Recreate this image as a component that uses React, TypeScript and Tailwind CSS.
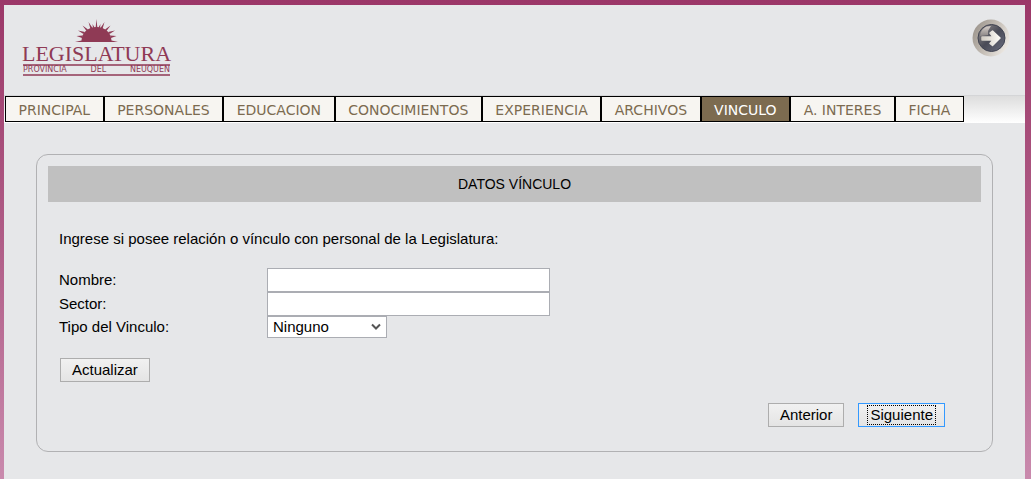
import { useState } from "react";
import type { ButtonHTMLAttributes } from "react";

const tabs = [
  "PRINCIPAL",
  "PERSONALES",
  "EDUCACION",
  "CONOCIMIENTOS",
  "EXPERIENCIA",
  "ARCHIVOS",
  "VINCULO",
  "A. INTERES",
  "FICHA",
];

function Logo() {
  return (
    <a href="#inicio" className="flex w-[147px] flex-col items-center text-[#8f3a55]">
      <svg viewBox="0 0 44 24" className="h-6 w-11" fill="currentColor" aria-hidden="true">
        <path d="M0 23Q3 22 6.500 21.500C7 13.500 13 8 21.500 8S36 13.500 36.500 21.500Q40 22 43 23Z" />
        <path d="M20.600 9 21.500 0 22.400 9ZM15.500 10 13.500 3 17.500 9ZM25.500 9 29.500 3 27.500 10ZM11.500 12 7.500 6.500 13 10.500ZM30 10.500 35.500 6.500 31.500 12ZM8.500 15 3 11.500 10 13ZM33 13 40 11.500 34.500 15ZM7 19 1.500 17 8 16.500ZM35 16.500 41.500 17 36 19ZM18 9 17.500 5 19.500 8.500ZM23.500 8.500 25.500 5 25 9Z" />
      </svg>
      <span className="font-['Liberation_Serif',serif] text-[22px] leading-[21px]">LEGISLATURA</span>
      <span className="flex w-full justify-between border-y-2 border-[#a5647a] font-['DejaVu_Sans',sans-serif] text-[8px] leading-[8px]">
        <span>PROVINCIA</span>
        <span>DEL</span>
        <span>NEUQUEN</span>
      </span>
    </a>
  );
}

function ExitIcon() {
  return (
    <svg viewBox="0 0 38 38" className="size-[38px]" aria-hidden="true">
      <defs>
        <linearGradient id="ring" x1="0" y1="0.2" x2="1" y2="0.7">
          <stop offset="0" stopColor="#9a938b" />
          <stop offset=".5" stopColor="#c4bdb5" />
          <stop offset="1" stopColor="#efebe6" />
        </linearGradient>
        <linearGradient id="glass" x1="0" y1="0" x2="1" y2="1">
          <stop offset="0" stopColor="#9a9492" />
          <stop offset=".5" stopColor="#4a4b57" />
          <stop offset="1" stopColor="#6b6e80" />
        </linearGradient>
        <linearGradient id="shine" x1="0" y1="0" x2="0" y2="1">
          <stop offset="0" stopColor="#d6cec9" />
          <stop offset="1" stopColor="#8b8686" />
        </linearGradient>
        <linearGradient id="arrow" gradientUnits="userSpaceOnUse" x1="9" y1="0" x2="29" y2="0">
          <stop offset="0" stopColor="#cfc9c1" />
          <stop offset="1" stopColor="#fffdf8" />
        </linearGradient>
      </defs>
      <circle cx="19" cy="19" r="18.500" fill="url(#ring)" />
      <circle cx="19.500" cy="19" r="13.500" fill="url(#glass)" stroke="#3f4250" strokeWidth="1" />
      <path d="M8 17C9 10 13 7 19 7L16 12 16 16Z" fill="url(#shine)" />
      <path
        d="M10 18H21L18 14 20.500 12 28 19 20.500 26.500 18 24.500 21 21H10Z"
        fill="url(#arrow)"
        stroke="url(#arrow)"
        strokeWidth="1.500"
        strokeLinejoin="round"
      />
    </svg>
  );
}

function FormButton({ className = "", ...props }: ButtonHTMLAttributes<HTMLButtonElement>) {
  return (
    <button
      className={`h-6 border bg-linear-to-b from-[#f1f1f1] to-[#e4e4e4] text-black ${className}`}
      {...props}
    />
  );
}

export default function App() {
  const [nombre, setNombre] = useState("");
  const [sector, setSector] = useState("");
  const [tipo, setTipo] = useState("Ninguno");

  return (
    <div className="min-h-screen bg-linear-to-b from-[#9b3768] via-[#b05d87] to-[#c98aad] pt-[5px] pr-[6px] pl-1">
      <div className="min-h-[calc(100vh-5px)] bg-[#e6e7e9] font-['Liberation_Sans',Arial,sans-serif] text-[15px] text-black">
        <header className="flex h-[90px] items-start justify-between pt-[14px] pr-[15px] pl-[19px]">
          <Logo />
          <a href="#salir" aria-label="Salir">
            <ExitIcon />
          </a>
        </header>

        <nav className="border-t border-[#d4d5d7] bg-linear-to-b from-[#dddddd] to-white pb-px pl-px">
          <div className="flex max-w-[959px]">
            {tabs.map((tab) => (
              <a
                key={tab}
                href="#"
                aria-current={tab === "VINCULO" ? "page" : undefined}
                className={`flex-auto border border-black px-[11px] pt-0.5 text-center font-['Verdana','DejaVu_Sans',sans-serif] text-[14px] leading-[22px] whitespace-nowrap ${
                  tab === "VINCULO" ? "bg-[#7c6b50] text-white" : "bg-[#f7f5f1] text-[#7c6b50]"
                }`}
              >
                {tab}
              </a>
            ))}
          </div>
        </nav>

        <main className="px-8 pt-[31px] pb-7">
          <form
            className="rounded-xl border border-[#b1b1b3] p-[11px] pb-6"
            onSubmit={(event) => event.preventDefault()}
          >
            <h1 className="bg-[#c0c0c0] text-center text-[14px] leading-9">DATOS VÍNCULO</h1>
            <div className="px-[11px] pt-7">
              <p className="leading-[18px]">
                Ingrese si posee relación o vínculo con personal de la Legislatura:
              </p>
              <div className="mt-5 grid grid-cols-[208px_1fr] items-center">
                <label htmlFor="nombre">Nombre:</label>
                <input
                  id="nombre"
                  value={nombre}
                  onChange={(event) => setNombre(event.target.value)}
                  className="h-6 w-[283px] border border-[#abadb3] bg-white px-1"
                />
                <label htmlFor="sector">Sector:</label>
                <input
                  id="sector"
                  value={sector}
                  onChange={(event) => setSector(event.target.value)}
                  className="h-6 w-[283px] border border-[#abadb3] bg-white px-1"
                />
                <label htmlFor="tipo">Tipo del Vinculo:</label>
                <div className="grid h-[22px] w-[120px] items-center">
                  <select
                    id="tipo"
                    value={tipo}
                    onChange={(event) => setTipo(event.target.value)}
                    className="col-start-1 row-start-1 h-[22px] appearance-none border border-[#abadb3] bg-white pr-5 pl-[5px] leading-5"
                  >
                    <option>Ninguno</option>
                    <option>Familiar</option>
                    <option>Laboral</option>
                  </select>
                  <svg
                    viewBox="0 0 10 8"
                    className="pointer-events-none col-start-1 row-start-1 mr-[6px] h-2 w-[10px] justify-self-end"
                    fill="none"
                    stroke="#555555"
                    strokeWidth="2"
                    aria-hidden="true"
                  >
                    <path d="M1 1.500 5 5.500 9 1.500" />
                  </svg>
                </div>
              </div>
              <FormButton type="submit" className="mt-[19px] ml-px block border-[#adadad] px-[11px]">
                Actualizar
              </FormButton>
              <div className="mt-[21px] flex justify-end gap-[14px] pr-[25px]">
                <FormButton type="button" className="border-[#adadad] px-[11px]">
                  Anterior
                </FormButton>
                <FormButton type="button" className="border-[#3399ff] px-2">
                  <span className="block border border-dotted border-black px-0.5 leading-[18px]">Siguiente</span>
                </FormButton>
              </div>
            </div>
          </form>
        </main>
      </div>
    </div>
  );
}
